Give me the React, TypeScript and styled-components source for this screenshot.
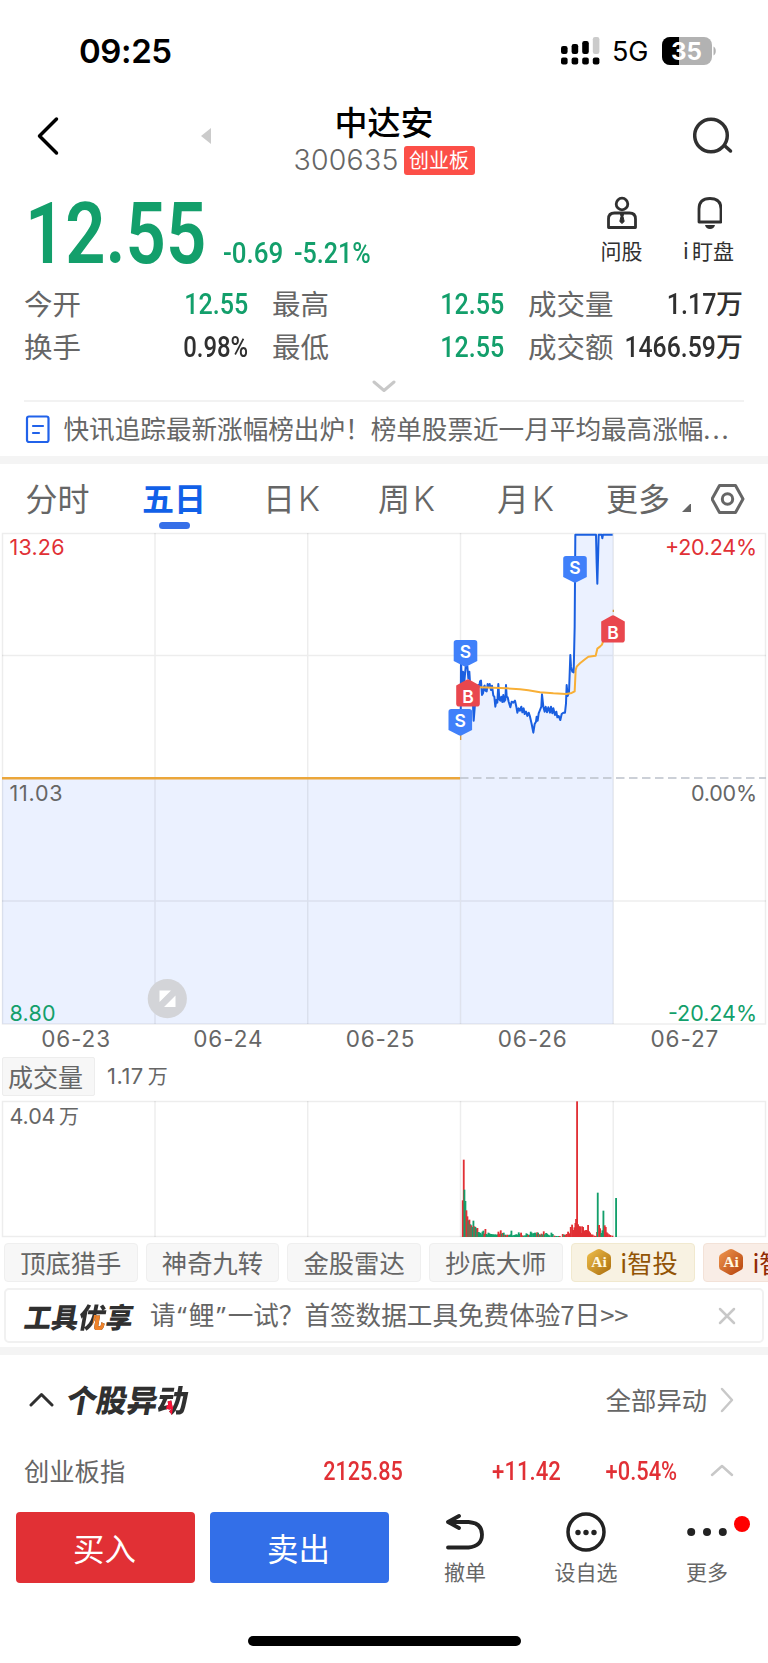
import React from 'react';
import styled, { createGlobalStyle } from 'styled-components';

const CJK = '"Noto Sans CJK SC", sans-serif';
const GREEN = '#139f6b';
const RED = '#e13035';
const INK = '#303030';
const GREY = '#666666';

const Global = createGlobalStyle`
  * { box-sizing: border-box; }
  body { margin: 0; background: #fff; }
  svg { display: block; flex: none; }
`;

const Page = styled.div`
  width: 768px;
  height: 1663px;
  overflow: hidden;
  background: #fff;
  display: flex;
  flex-direction: column;
  font-family: ${CJK};
  color: ${GREY};
`;

const StatusBar = styled.div`
  height: 104px;
  flex: none;
  padding: 0 51px 0 79px;
  display: flex;
  align-items: center;
  justify-content: space-between;
`;
const Clock = styled.div`
  font: 600 33px/40px Inter, sans-serif;
  color: #000;
  letter-spacing: -0.4px;
  padding-bottom: 2px;
`;
const StatusRight = styled.div`
  display: flex;
  align-items: center;
  padding-bottom: 2px;
`;
const Network = styled.div`
  width: 62px;
  padding: 1px 0 0 12px;
  font: 400 27px/32px Inter, sans-serif;
  letter-spacing: -0.2px;
  color: #000;
`;

const NavBar = styled.div`
  height: 82px;
  flex: none;
  display: grid;
  grid-template-columns: 101px 100px 1fr 75px;
`;
const TitleBlock = styled.div`
  display: flex;
  flex-direction: column;
  align-items: center;
  margin: -1px -75px 0 -201px;
`;
const Title = styled.div`
  font-weight: 500;
  font-size: 33px;
  line-height: 36px;
  color: #000;
`;
const CodeRow = styled.div`
  display: flex;
  align-items: center;
  margin-top: 6px;
  gap: 5px;
`;
const Code = styled.div`
  font: 300 28.5px/30px Inter, sans-serif;
  letter-spacing: 0.2px;
  color: ${GREY};
`;
const Board = styled.div`
  height: 29px;
  padding: 0 5.5px;
  border-radius: 3px;
  background: #fc4f48;
  color: #fff;
  font-size: 20px;
  line-height: 28px;
`;

const QuoteRow = styled.div`
  height: 96px;
  flex: none;
  display: flex;
  align-items: flex-start;
  padding-left: 25px;
`;
const Din = styled.span<{ $size: number; $left?: boolean; $weight?: number; $squeeze?: number }>`
  display: inline-block;
  font-family: Roboto, sans-serif;
  font-weight: ${(p) => p.$weight ?? 500};
  font-size: ${(p) => p.$size}px;
  white-space: nowrap;
  transform: scaleX(${(p) => p.$squeeze ?? 0.85});
  transform-origin: ${(p) => (p.$left ? 'left' : 'right')} center;
`;
const Price = styled.div`
  width: 198px;
  flex: none;
  color: ${GREEN};
  line-height: 95px;
`;
const Change = styled.div<{ $w: number }>`
  width: ${(p) => p.$w}px;
  flex: none;
  color: ${GREEN};
  line-height: 36px;
  padding-top: 49px;
`;
const QuickActions = styled.div`
  flex: 1;
  display: flex;
  justify-content: flex-end;
  padding: 10px 21px 0 0;
`;
const QuickAction = styled.div`
  width: 77px;
  margin-left: 10px;
  display: flex;
  flex-direction: column;
  align-items: center;
  gap: 5px;
  font-size: 21px;
  line-height: 30px;
  color: ${INK};
`;
const LatinI = styled.span`
  margin-right: 3px;
`;

const Stats = styled.div`
  height: 86px;
  flex: none;
  padding-left: 24px;
  display: grid;
  grid-template-columns: 224px 232px 215px;
  grid-auto-rows: 43.3px;
  column-gap: 24px;
`;
const Stat = styled.div`
  display: flex;
  justify-content: space-between;
  align-items: center;
  padding-bottom: 2px;
  font-size: 28.5px;
  line-height: 41px;
  white-space: nowrap;
`;
const StatValue = styled.div<{ $color: string }>`
  flex: 1 1 0;
  min-width: 0;
  padding-top: 4px;
  display: flex;
  justify-content: flex-end;
  align-items: center;
  color: ${(p) => p.$color};
`;
const Unit = styled.span`
  font-weight: 500;
  font-size: 27px;
  line-height: 38px;
  padding-bottom: 3px;
`;
const Expander = styled.div`
  height: 34px;
  flex: none;
  margin: 0 24px;
  display: flex;
  justify-content: center;
  padding-top: 12px;
  border-bottom: 2px solid #f2f2f2;
`;
const News = styled.div`
  height: 54px;
  flex: none;
  display: flex;
  align-items: center;
  gap: 13.5px;
  padding-left: 25px;
  font-size: 25.6px;
  line-height: 36px;
  white-space: nowrap;
`;
const NewsText = styled.div`
  padding-bottom: 2px;
`;
const Ellipsis = styled.span`
  letter-spacing: 2px;
`;
const Band = styled.div`
  height: 8px;
  flex: none;
  background: #f4f4f4;
`;

const Tabs = styled.div`
  height: 68px;
  flex: none;
  display: grid;
  grid-template-columns: 116.5px 121px 115px 119px 109px 105px auto;
  padding: 11px 0 0 25.5px;
`;
const Tab = styled.div<{ $active?: boolean }>`
  display: flex;
  flex-direction: column;
  align-items: flex-start;
  font-size: 32px;
  line-height: 44px;
  font-weight: ${(p) => (p.$active ? 700 : 400)};
  color: ${(p) => (p.$active ? '#1160e8' : GREY)};
  white-space: nowrap;
`;
const TabRow = styled.div`
  display: flex;
  align-items: flex-end;
  gap: 10px;
`;
const TabK = styled.span`
  font-family: Inter, sans-serif;
  font-size: 34px;
  font-weight: 300;
  margin-left: 3px;
`;
const Underline = styled.div`
  width: 31px;
  height: 7px;
  margin: 3px 0 0 17px;
  border-radius: 4px;
  background: #366fe8;
`;

const DateRow = styled.div`
  height: 30px;
  flex: none;
  display: grid;
  grid-template-columns: repeat(5, 152.2px);
  text-align: center;
  font: 400 22.5px/28px Inter, sans-serif;
  letter-spacing: 0.9px;
`;
const VolumeHead = styled.div`
  height: 45px;
  flex: none;
  display: flex;
  align-items: center;
  gap: 12px;
  padding: 0 0 3px 2px;
`;
const VolumeName = styled.div`
  width: 93px;
  height: 39px;
  border: 1px solid #ededed;
  border-radius: 2px;
  background: #f7f7f7;
  text-align: center;
  font-size: 25px;
  line-height: 36px;
  padding-right: 6px;
`;
const VolumeValue = styled.div`
  font: 400 22px/30px Inter, ${CJK};
  letter-spacing: 0.5px;
`;
const Wan = styled.span`
  font-family: ${CJK};
  font-size: 20px;
  margin-left: 4px;
`;

const Chips = styled.div`
  height: 50px;
  flex: none;
  overflow: hidden;
  display: flex;
  gap: 8.2px;
  padding: 5px 0 0 4px;
`;
const Chip = styled.div<{ $kind?: 'gold' | 'copper' }>`
  flex: none;
  width: ${(p) => (p.$kind ? 124 : 133.5)}px;
  height: 39px;
  display: flex;
  align-items: center;
  justify-content: center;
  gap: 8.5px;
  padding: 0 ${(p) => (p.$kind ? 2 : 0)}px 2px 0;
  border-radius: 4px;
  border: 1px solid ${(p) => (p.$kind === 'gold' ? '#f1e9cf' : p.$kind ? '#f3e2d8' : '#efefef')};
  background: ${(p) => (p.$kind === 'gold' ? '#f8f2e2' : p.$kind ? '#f9ede6' : '#f7f7f7')};
  color: ${(p) => (p.$kind === 'gold' ? '#925405' : p.$kind ? '#922b05' : GREY)};
  font-size: 25.3px;
  line-height: 36px;
  white-space: nowrap;
`;
const Banner = styled.div`
  height: 55px;
  flex: none;
  margin: 0 4px 4px;
  padding: 0 26px 0 19px;
  display: flex;
  align-items: center;
  border: 2px solid #f1f1f1;
  border-radius: 5px;
  font-size: 25.6px;
  line-height: 36px;
  white-space: nowrap;
`;
const Brand = styled.div<{ $size: number; $w: number; $squeeze: number }>`
  width: ${(p) => p.$w}px;
  flex: none;
  font-weight: 900;
  font-size: ${(p) => p.$size}px;
  line-height: 36px;
  color: ${INK};
  white-space: nowrap;
  transform: skewX(-10deg) scaleX(${(p) => p.$squeeze});
  transform-origin: left center;
`;
const Accent = styled.span<{ $color: string; $from: string; $width: string; $height: string }>`
  color: transparent;
  background:
    linear-gradient(${(p) => p.$color}, ${(p) => p.$color}) no-repeat
      ${(p) => p.$from} 100% / ${(p) => p.$width} ${(p) => p.$height},
    linear-gradient(${INK}, ${INK});
  background-clip: text;
  -webkit-background-clip: text;
`;
const BannerText = styled.div`
  flex: 1;
  padding-bottom: 1px;
`;
const Quote = styled.span`
  font-family: "Noto Sans", sans-serif;
  margin: 0 2px;
`;

const SectionHead = styled.div`
  height: 89px;
  flex: none;
  display: flex;
  align-items: center;
  padding: 0 34px 0 29px;
`;
const SectionTitle = styled.div`
  flex: 1;
  padding: 0 0 1px 13px;
`;
const More = styled.div`
  display: flex;
  align-items: center;
  gap: 13px;
  font-size: 25.3px;
  line-height: 36px;
`;
const MoreText = styled.div`
  padding-bottom: 2px;
`;
const IndexRow = styled.div`
  height: 68px;
  flex: none;
  display: grid;
  grid-template-columns: 150px 229px 158px 116px 57px;
  align-items: start;
  justify-items: end;
  padding: 9px 0 0 24px;
  color: ${RED};
  font-size: 25.3px;
  line-height: 36px;
`;
const IndexName = styled.div`
  justify-self: start;
  margin-top: -1px;
  color: ${GREY};
`;
const IndexArrow = styled.div`
  padding-top: 10px;
`;

const ActionBar = styled.div`
  height: 124px;
  flex: none;
  display: flex;
  padding-left: 16px;
`;
const TradeButton = styled.div<{ $bg: string }>`
  width: 179px;
  height: 71px;
  margin-right: 15px;
  padding-right: 2px;
  border-radius: 4px;
  background: ${(p) => p.$bg};
  color: #fff;
  font-size: 31.5px;
  line-height: 70px;
  text-align: center;
`;
const Tool = styled.div<{ $w: number }>`
  width: ${(p) => p.$w}px;
  position: relative;
  padding-left: 1px;
  display: flex;
  flex-direction: column;
  align-items: center;
  gap: 3px;
  font-size: 21px;
  line-height: 32px;
`;
const RedDot = styled.div`
  position: absolute;
  top: 4px;
  right: 17px;
  width: 16px;
  height: 16px;
  border-radius: 50%;
  background: #ff0000;
`;
const HomeBar = styled.div`
  width: 273px;
  height: 10px;
  flex: none;
  margin: 0 auto;
  border-radius: 5px;
  background: #000;
`;

const Signal = () => (
  <svg width="39" height="28" viewBox="0 0 39 28">
    {[0, 10.6, 21.2, 31.8].map((x, i) => (
      <g key={x}>
        <rect x={x} y="20.5" width="6.6" height="7" rx="2" fill="#000" />
        <rect
          x={x}
          y={[9, 7, 4, 0][i]}
          width="6.6"
          height={[8, 10, 13, 17][i]}
          rx="2.2"
          fill={i === 3 ? '#cbcbcb' : '#000'}
        />
      </g>
    ))}
  </svg>
);

const Battery = () => (
  <svg width="55" height="28" viewBox="0 0 55 28">
    <defs>
      <clipPath id="cell">
        <rect width="50" height="28" rx="8" />
      </clipPath>
    </defs>
    <rect width="50" height="28" rx="8" fill="#b2b2b2" />
    <rect width="17" height="28" fill="#000" clipPath="url(#cell)" />
    <path d="M51.5 9.5c3 1.5 3 7.5 0 9z" fill="#b2b2b2" />
    <text x="9" y="22.5" fontFamily="Inter" fontWeight="700" fontSize="24" fill="#fff" textLength="31" lengthAdjust="spacingAndGlyphs">35</text>
  </svg>
);

const AiBadge = ({ id, from, to }: { id: string; from: string; to: string }) => (
  <svg width="26" height="28" viewBox="0 0 26 28">
    <defs>
      <linearGradient id={id} x1="0" y1="0" x2="1" y2="1">
        <stop offset="0" stopColor={from} />
        <stop offset="1" stopColor={to} />
      </linearGradient>
    </defs>
    <path d="M11 1.5Q13 .3 15 1.5L23 6Q25 7 25 9.5V18.5Q25 21 23 22L15 26.5Q13 27.7 11 26.5L3 22Q1 21 1 18.5V9.5Q1 7 3 6Z" fill={`url(#${id})`} />
    <text x="13" y="18.5" textAnchor="middle" fontFamily="Liberation Serif" fontWeight="700" fontSize="15.5" fill="#fff8e0">Ai</text>
  </svg>
);

const PRICE =
  '62,640 63,420 66,500 69,455 73,485 77,440 82,438 85,475 88,455 92,520 97,505 101,602 106,540 111,520 115,495 118,500 120,484 123,482 126,525 129,520 132,500 134,497 136,512 140,514 143,492 146,500 149,492 153,510 156,497 160,527 163,530 166,560 169,540 172,548 175,492 178,538 181,542 184,530 187,546 190,525 192,545 196,540 198,495 200,530 203,532 206,545 211,562 215,545 220,548 225,542 229,560 232,578 236,565 240,572 244,560 247,577 251,565 254,582 258,575 262,588 266,578 270,590 275,612 280,638 284,612 288,605 290,590 293,602 296,580 300,570 304,560 306,523 310,560 314,575 317,560 321,577 325,562 330,578 333,560 337,580 340,565 345,585 349,575 352,592 356,588 361,600 365,582 370,578 375,578 378,550 380,495 383,528 387,518 391,405 393,440 397,455 401,457 404,320 406,44 468,44 470,130 472,191 474,120 476,44 485,44 487,55 489,44 518,44';
const AVERAGE =
  '118,502 160,503 200,505 240,508 265,511 300,517 340,520 378,522 395,519 404,514 407,450 410,440 420,430 435,418 445,410 467,407 472,386 480,380 486,374 490,362 505,335 519,300';

const TradeMark = ({ x, y, kind }: { x: number; y: number; kind: 'B' | 'S' }) => (
  <g transform={`translate(${x} ${y})`}>
    {kind === 'S' ? (
      <path d="M-9-11.5H9Q11.8-11.5 11.8-8.7V9.5L1.5 14.8Q0 15.6-1.5 14.8L-11.8 9.5V-8.7Q-11.8-11.5-9-11.5Z" fill="#4080fa" />
    ) : (
      <path d="M-9 12H9Q11.8 12 11.8 9.2V-9L1.5-14.8Q0-15.6-1.5-14.8L-11.8-9V9.2Q-11.8 12-9 12Z" fill="#e9474e" />
    )}
    <text y={kind === 'S' ? 6.5 : 8} textAnchor="middle" fontFamily="Inter" fontWeight="600" fontSize="17.5" fill="#fff">{kind}</text>
  </g>
);

const AxisText = ({ x, y, w, end, color, children }: { x: number; y: number; w: number; end?: boolean; color: string; children: string }) => (
  <text x={end ? x - w : x} y={y} textLength={w} fontFamily="Inter" fontSize="21.5" fill={color}>{children}</text>
);

const PriceChart = () => (
  <svg width="768" height="493" viewBox="0 532 768 493">
    <path d="M2 778H460.5V1024H2Z" fill="#ebf1ff" />
    <g transform="translate(440 520) scale(.33333)">
      <polygon points={`61.5,1512 ${PRICE} 520,44 520,1512`} fill="#ebf1ff" />
    </g>
    <g stroke="#000" strokeOpacity=".07" strokeWidth="1.5" fill="none">
      <rect x="2.5" y="533.5" width="763" height="490.5" />
      <path d="M155 533V1024M307.7 533V1024M460.5 533V1024M613.2 533V1024M2 655.5H766M2 901H766" />
    </g>
    <path d="M460 778H766" stroke="#bcc1ca" strokeWidth="1.7" strokeDasharray="8.5 4.5" />
    <path d="M2 778.3H460" stroke="#eba63a" strokeWidth="2.6" />
    <g transform="translate(440 520) scale(.33333)" fill="none" strokeLinejoin="round">
      <polyline points={PRICE} stroke="#1a5fe0" strokeWidth="6" />
      <polyline points={AVERAGE} stroke="#f8af36" strokeWidth="6" />
      <path d="M62 640V660M520 269V276" stroke="#d39a45" strokeWidth="4" />
    </g>
    <TradeMark x={575} y={567.5} kind="S" />
    <TradeMark x={465.5} y={651.5} kind="S" />
    <TradeMark x={468} y={694.5} kind="B" />
    <TradeMark x={460.3} y={720.5} kind="S" />
    <TradeMark x={613} y={630.5} kind="B" />
    <AxisText x={9.5} y={555.3} w={55} color={RED}>13.26</AxisText>
    <AxisText x={757} y={555.3} w={92} end color={RED}>+20.24%</AxisText>
    <AxisText x={9.5} y={801} w={53} color={GREY}>11.03</AxisText>
    <AxisText x={757} y={801} w={66} end color={GREY}>0.00%</AxisText>
    <AxisText x={9.5} y={1020.5} w={46} color={GREEN}>8.80</AxisText>
    <AxisText x={757} y={1020.5} w={89} end color={GREEN}>-20.24%</AxisText>
    <circle cx="167.3" cy="998.7" r="19.6" fill="#d3d4d8" />
    <path d="M159.5 990.5H171L159.5 1002ZM175.5 995.5V1007H164Z" fill="#fff" />
  </svg>
);

/* [x offset, height, side] for each minute bar, in thirds of a pixel */
const BARS: [number, number, 'r' | 'g'][] = [
  [68, 110, 'r'], [71, 232, 'r'], [73, 142, 'g'], [76, 108, 'g'], [79, 80, 'r'], [82, 62, 'r'], [85, 50, 'g'],
  [88, 52, 'r'], [91, 38, 'g'], [94, 35, 'r'], [97, 30, 'g'], [100, 49, 'g'], [103, 32, 'r'], [106, 30, 'g'],
  [109, 26, 'g'], [112, 27, 'r'], [115, 15, 'g'], [118, 14, 'g'], [121, 12, 'g'], [124, 8, 'g'], [127, 16, 'g'],
  [130, 19, 'g'], [133, 10, 'r'], [136, 24, 'r'], [139, 9, 'g'], [142, 7, 'g'], [145, 13, 'g'], [148, 11, 'g'],
  [151, 9, 'g'], [154, 9, 'g'], [157, 8, 'g'], [160, 8, 'g'], [163, 7, 'g'], [166, 8, 'g'], [169, 6, 'g'],
  [172, 8, 'g'], [175, 16, 'r'], [178, 10, 'r'], [182, 20, 'r'], [185, 10, 'g'], [188, 12, 'r'], [191, 13, 'g'],
  [194, 6, 'r'], [197, 7, 'g'], [200, 5, 'r'], [203, 7, 'r'], [207, 6, 'g'], [211, 8, 'g'], [214, 19, 'g'],
  [218, 5, 'g'], [222, 6, 'g'], [226, 7, 'g'], [229, 8, 'g'], [232, 7, 'g'], [236, 14, 'g'], [239, 9, 'g'],
  [243, 13, 'r'], [247, 5, 'r'], [251, 4, 'g'], [255, 5, 'g'], [259, 11, 'g'], [262, 9, 'g'], [265, 6, 'r'],
  [269, 7, 'g'], [272, 16, 'g'], [275, 13, 'g'], [279, 10, 'g'], [282, 12, 'g'], [285, 13, 'g'], [288, 8, 'g'],
  [291, 14, 'r'], [294, 13, 'g'], [297, 8, 'r'], [300, 7, 'g'], [304, 10, 'r'], [307, 8, 'g'], [311, 17, 'r'],
  [314, 8, 'g'], [318, 12, 'g'], [321, 10, 'g'], [325, 7, 'g'], [329, 5, 'g'], [334, 13, 'g'], [338, 9, 'g'],
  [343, 4, 'r'], [348, 3, 'g'], [354, 3, 'g'], [359, 3, 'r'], [368, 9, 'r'], [372, 7, 'g'], [376, 7, 'r'],
  [380, 9, 'r'], [384, 16, 'r'], [388, 11, 'r'], [392, 30, 'r'], [396, 37, 'r'], [400, 21, 'r'], [403, 29, 'r'],
  [406, 42, 'r'], [408, 54, 'r'], [411, 407, 'r'], [414, 38, 'r'], [417, 32, 'r'], [420, 32, 'r'], [423, 12, 'r'],
  [426, 32, 'r'], [429, 30, 'r'], [432, 18, 'r'], [435, 20, 'r'], [438, 21, 'r'], [441, 20, 'r'], [444, 36, 'r'],
  [447, 17, 'r'], [450, 13, 'r'], [454, 8, 'r'], [458, 7, 'r'], [463, 4, 'r'], [467, 3, 'r'], [471, 15, 'r'],
  [473, 133, 'g'], [477, 36, 'r'], [480, 26, 'r'], [484, 12, 'g'], [487, 20, 'g'], [490, 79, 'g'], [494, 35, 'r'],
  [497, 30, 'r'], [500, 14, 'r'], [503, 11, 'r'], [507, 8, 'r'], [511, 6, 'r'], [517, 4, 'r'], [528, 117, 'g'],
];

const VolumeChart = () => (
  <svg width="768" height="138" viewBox="0 1100 768 138">
    <g stroke="#000" strokeOpacity=".07" strokeWidth="1.5" fill="none">
      <rect x="2.5" y="1101.5" width="763" height="135" />
      <path d="M155 1101V1237M307.7 1101V1237M460.5 1101V1237M613.2 1101V1237" />
    </g>
    <text x="9.5" y="1124" fontFamily="Inter" fontSize="21.5" fill={GREY}>
      <tspan textLength="46">4.04</tspan>
      <tspan x="59" y="1123.5" fontFamily="Noto Sans CJK SC" fontSize="20">万</tspan>
    </text>
    <g transform="translate(440 1000) scale(.33333)">
      {BARS.map(([x, h, side]) => (
        <rect key={x} x={x - 2.5} y={711 - h} width="5.5" height={h} fill={side === 'r' ? RED : GREEN} />
      ))}
    </g>
  </svg>
);

const Chevron = ({ w, h, d, color, sw = 3 }: { w: number; h: number; d: string; color: string; sw?: number }) => (
  <svg width={w} height={h} viewBox={`0 0 ${w} ${h}`} fill="none" stroke={color} strokeWidth={sw} strokeLinecap="round" strokeLinejoin="round">
    <path d={d} />
  </svg>
);

const STATS: { label: string; value: string; unit?: string; color: string; squeeze?: number }[] = [
  { label: '今开', value: '12.55', color: GREEN },
  { label: '最高', value: '12.55', color: GREEN },
  { label: '成交量', value: '1.17', unit: '万', color: INK },
  { label: '换手', value: '0.98%', color: INK, squeeze: 0.81 },
  { label: '最低', value: '12.55', color: GREEN },
  { label: '成交额', value: '1466.59', unit: '万', color: INK, squeeze: 0.84 },
];

export default function App() {
  return (
    <Page>
      <Global />
      <StatusBar>
        <Clock>09:25</Clock>
        <StatusRight>
          <Signal />
          <Network>5G</Network>
          <Battery />
        </StatusRight>
      </StatusBar>

      <NavBar>
        <svg width="99" height="62" viewBox="-37 0 99 62" fill="none" stroke="#000" strokeWidth="3.5" strokeLinecap="round" strokeLinejoin="round">
          <path d="M19.5 15L2.5 32L19.5 49" />
        </svg>
        <svg width="112" height="62" viewBox="0 0 112 62">
          <path d="M100 32L110 24V40Z" fill="#cbcbcb" />
        </svg>
        <TitleBlock>
          <Title>中达安</Title>
          <CodeRow>
            <Code>300635</Code>
            <Board>创业板</Board>
          </CodeRow>
        </TitleBlock>
        <svg width="75" height="62" viewBox="0 0 75 62" fill="none" stroke={INK} strokeWidth="3.5" strokeLinecap="round">
          <circle cx="18" cy="31.5" r="16.3" />
          <path d="M32 42L37.5 47" />
        </svg>
      </NavBar>

      <QuoteRow>
        <Price>
          <Din $size={86} $left $weight={600} $squeeze={0.82}>12.55</Din>
        </Price>
        <Change $w={71}>
          <Din $size={29.5} $left $squeeze={0.88}>-0.69</Din>
        </Change>
        <Change $w={100}>
          <Din $size={29.5} $left>-5.21%</Din>
        </Change>
        <QuickActions>
          <QuickAction>
            <svg width="32" height="34" viewBox="0 0 32 34" fill="none" stroke={INK} strokeWidth="2.8" strokeLinejoin="round">
              <circle cx="16" cy="8" r="5.8" />
              <path d="M2.5 31.5V23Q2.5 17 8.5 17H23.5Q29.5 17 29.5 23V31.5Z" />
              <path d="M14.5 18H17.5L17 20.5L18.2 25.5L16 27.5L13.8 25.5L15 20.5Z" fill={INK} strokeWidth="1" />
            </svg>
            问股
          </QuickAction>
          <QuickAction>
            <svg width="26" height="34" viewBox="-1 0 26 34" fill="none" stroke={INK} strokeWidth="2.8" strokeLinejoin="round">
              <path d="M2 26V13Q2 2.5 13 2.5Q24 2.5 24 13V26Z" />
              <path d="M8 29H18Q17 33 13 33Q9 33 8 29Z" fill={INK} stroke="none" />
            </svg>
            <div><LatinI>i</LatinI>盯盘</div>
          </QuickAction>
        </QuickActions>
      </QuoteRow>

      <Stats>
        {STATS.map((s) => (
          <Stat key={s.label}>
            {s.label}
            <StatValue $color={s.color}>
              <Din $size={29.5} $squeeze={s.squeeze}>{s.value}</Din>
              {s.unit && <Unit>{s.unit}</Unit>}
            </StatValue>
          </Stat>
        ))}
      </Stats>
      <Expander>
        <Chevron w={24} h={13} d="M2 2L12 10.5L22 2" color="#c8c8c8" />
      </Expander>
      <News>
        <svg width="25" height="29" viewBox="0 0 25 29" fill="none" stroke="#2162ea" strokeWidth="2.2" strokeLinecap="round">
          <rect x="2" y="1.5" width="21.5" height="25.5" rx="2" />
          <path d="M8 11H18M8 18H14" />
        </svg>
        <NewsText>快讯追踪最新涨幅榜出炉！榜单股票近一月平均最高涨幅<Ellipsis>...</Ellipsis></NewsText>
      </News>
      <Band />

      <Tabs>
        <Tab>分时</Tab>
        <Tab $active>五日<Underline /></Tab>
        <Tab><div>日<TabK>K</TabK></div></Tab>
        <Tab><div>周<TabK>K</TabK></div></Tab>
        <Tab><div>月<TabK>K</TabK></div></Tab>
        <Tab>
          <TabRow>
            更多
            <svg width="12" height="15" viewBox="0 0 12 15"><path d="M11 -1V8H2Z" fill={GREY} /></svg>
          </TabRow>
        </Tab>
        <svg width="34" height="48" viewBox="0.5 -2 34 48" fill="none" stroke={GREY} strokeWidth="3" strokeLinejoin="round">
          <path d="M9 8.5H25L32.5 22L25 35.5H9L1.5 22Z" />
          <circle cx="17" cy="22" r="5.2" />
        </svg>
      </Tabs>

      <PriceChart />
      <DateRow>
        {['06-23', '06-24', '06-25', '06-26', '06-27'].map((d) => <div key={d}>{d}</div>)}
      </DateRow>
      <VolumeHead>
        <VolumeName>成交量</VolumeName>
        <VolumeValue>1.17<Wan>万</Wan></VolumeValue>
      </VolumeHead>
      <VolumeChart />

      <Chips>
        <Chip>顶底猎手</Chip>
        <Chip>神奇九转</Chip>
        <Chip>金股雷达</Chip>
        <Chip>抄底大师</Chip>
        <Chip $kind="gold"><AiBadge id="gold" from="#f0c04c" to="#a96c0c" />i智投</Chip>
        <Chip $kind="copper"><AiBadge id="copper" from="#f09850" to="#b4410c" />i智投</Chip>
      </Chips>
      <Banner>
        <Brand $size={28} $w={125} $squeeze={0.97}>
          工具<Accent $color="#f08228" $from="100%" $width="46%" $height="53%">优</Accent>享
        </Brand>
        <BannerText>请<Quote>“</Quote>鲤<Quote>”</Quote>一试？首签数据工具免费体验7日&gt;&gt;</BannerText>
        <Chevron w={18} h={18} d="M2 2L16 16M16 2L2 16" color="#c8c8c8" sw={2.5} />
      </Banner>
      <Band />

      <SectionHead>
        <Chevron w={25} h={15} d="M2 13L12.5 2.5L23 13" color={INK} />
        <SectionTitle>
          <Brand $size={31} $w={130} $squeeze={0.98}>
            个股异<Accent $color="#fb1338" $from="40%" $width="22%" $height="48%">动</Accent>
          </Brand>
        </SectionTitle>
        <More>
          <MoreText>全部异动</MoreText>
          <Chevron w={14} h={26} d="M2 2L12 13L2 24" color="#c8c8c8" sw={2.5} />
        </More>
      </SectionHead>
      <IndexRow>
        <IndexName>创业板指</IndexName>
        <Din $size={26} $squeeze={0.83}>2125.85</Din>
        <Din $size={26}>+11.42</Din>
        <Din $size={26} $squeeze={0.84}>+0.54%</Din>
        <IndexArrow>
          <Chevron w={24} h={14} d="M2 12L12 3L22 12" color="#c8c8c8" sw={2.5} />
        </IndexArrow>
      </IndexRow>

      <ActionBar>
        <TradeButton $bg={RED}>买入</TradeButton>
        <TradeButton $bg="#336fe8">卖出</TradeButton>
        <Tool $w={121}>
          <svg width="40" height="40" viewBox="0 0 40 40" fill="none" stroke="#222" strokeWidth="3.8" strokeLinecap="round" strokeLinejoin="round">
            <path d="M14 4L3 10L14 16M3 10H23.5Q37 11 37 22.5Q37 34 23.5 35.5H3" />
          </svg>
          撤单
        </Tool>
        <Tool $w={121}>
          <svg width="40" height="40" viewBox="0 0 40 40">
            <circle cx="20" cy="20" r="18" fill="none" stroke="#222" strokeWidth="3.5" />
            {[12, 20, 28].map((x) => <circle key={x} cx={x} cy="20.5" r="2.7" fill="#222" />)}
          </svg>
          设自选
        </Tool>
        <Tool $w={121}>
          <svg width="40" height="40" viewBox="0 0 40 40">
            {[4.2, 20, 35.8].map((x) => <circle key={x} cx={x} cy="20" r="4" fill="#222" />)}
          </svg>
          更多
          <RedDot />
        </Tool>
      </ActionBar>
      <HomeBar />
    </Page>
  );
}
